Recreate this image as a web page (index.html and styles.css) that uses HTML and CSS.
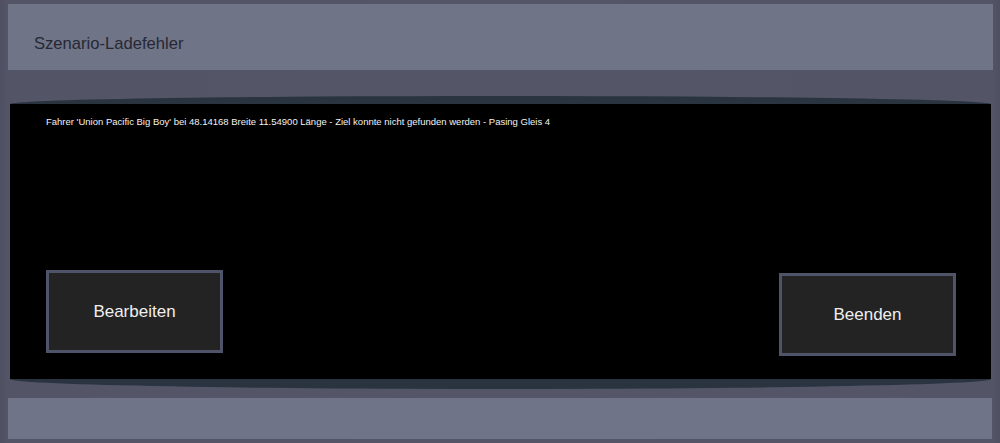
FILE: index.html
```html
<!DOCTYPE html>
<html lang="de">
<head>
<meta charset="utf-8">
<title>Szenario-Ladefehler</title>
<link rel="stylesheet" href="styles.css">
</head>
<body>
<div class="screen">
  <header class="titlebar">
    <h1 class="title">Szenario-Ladefehler</h1>
  </header>
  <div class="stage">
    <div class="lens lens-top"></div>
    <main class="panel">
      <p class="message">Fahrer 'Union Pacific Big Boy' bei 48.14168 Breite 11.54900 Länge - Ziel konnte nicht gefunden werden - Pasing Gleis 4</p>
      <div class="actions">
        <button class="btn btn-edit" type="button">Bearbeiten</button>
        <button class="btn btn-quit" type="button">Beenden</button>
      </div>
    </main>
    <div class="lens lens-bottom"></div>
  </div>
  <footer class="footerbar"></footer>
</div>
</body>
</html>
```

FILE: styles.css
```css
* { box-sizing: border-box; }
html, body {
  margin: 0;
  padding: 0;
  width: 1000px;
  height: 443px;
  overflow: hidden;
  background: #535566;
  font-family: "Liberation Sans", Arial, sans-serif;
}
.screen {
  width: 1000px;
  height: 443px;
  display: flex;
  flex-direction: column;
  background: linear-gradient(to right, #4e5061 0, #535566 8px, #545667 50%, #535566 992px, #4e5061 100%);
  padding-top: 4px;
}
.titlebar {
  margin: 0 7px 0 8px;
  height: 66px;
  background: #6f7487;
  display: flex;
  align-items: center;
  padding: 14px 0 0 26px;
}
.title {
  margin: 0;
  font-size: 16.6px;
  font-weight: normal;
  color: #262833;
  letter-spacing: 0;
}
.stage {
  margin: 26px 9px 0 10px;
  display: flex;
  flex-direction: column;
}
.lens {
  height: 8px;
  background: #2a3441;
}
.lens-top {
  border-radius: 50% 50% 0 0 / 100% 100% 0 0;
}
.lens-bottom {
  height: 10px;
  border-radius: 0 0 50% 50% / 0 0 100% 100%;
}
.panel {
  height: 275px;
  background: #000;
  display: flex;
  flex-direction: column;
  justify-content: space-between;
  padding: 12px 35px 23px 36px;
}
.message {
  margin: 0;
  color: #f2f2f2;
  font-size: 9.5px;
  line-height: 12px;
}
.actions {
  display: flex;
  justify-content: space-between;
  align-items: flex-end;
}
.btn {
  width: 177px;
  height: 83px;
  background: #232323;
  border: 3px solid #4f5469;
  color: #efefef;
  font-family: "Liberation Sans", Arial, sans-serif;
  font-size: 17px;
  padding: 0;
  margin: 0;
}
.btn-edit { margin-bottom: 3px; }
.footerbar {
  margin: 9px 8px 0 8px;
  height: 41px;
  background: #6f7488;
}
```
